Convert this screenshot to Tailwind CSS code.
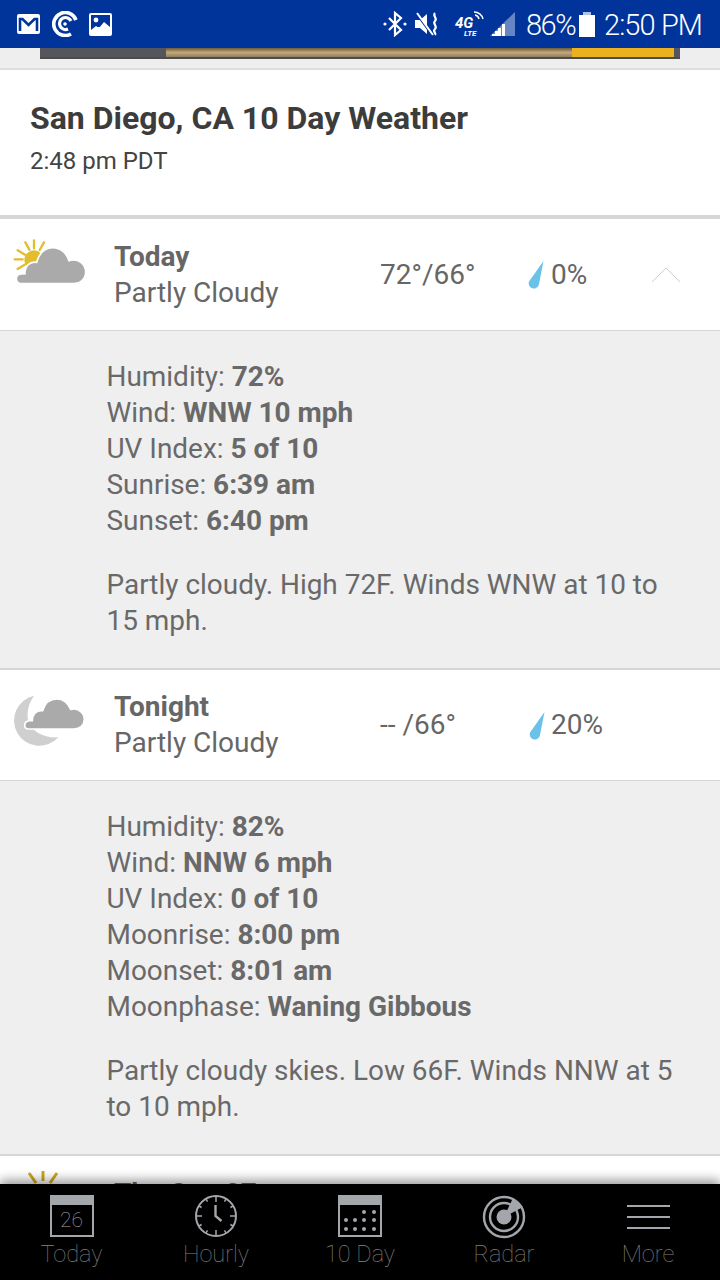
<!DOCTYPE html>
<html lang="en">
<head>
    <meta charset="UTF-8">
    <meta name="viewport" content="width=device-width, initial-scale=1.0">
    <title>San Diego, CA 10 Day Weather</title>
    <script src="https://cdn.jsdelivr.net/npm/@tailwindcss/browser@4"></script>
</head>
<body class="w-[720px] h-[1280px] overflow-hidden bg-[#eeeeee] font-['Roboto',sans-serif] flex flex-col">

    <!-- status bar -->
    <div class="h-[48px] shrink-0 bg-[#00349b] flex items-center justify-between pl-[17px] pr-[18px] text-white relative z-10">
        <div class="flex items-center">
            <svg width="23" height="20" viewBox="0 0 23 20" class="mr-[12px]"><rect width="23" height="20" rx="2" fill="#fff"/><path d="M3 17V5h2.500l6 6 6-6H20v12" fill="none" stroke="#00349b" stroke-width="2.600"/></svg>
            <svg width="26" height="26" viewBox="0 0 26 26" class="mr-[11px]"><path d="M19 23A11.500 11.500 0 1 1 24 9" fill="none" stroke="#fff" stroke-width="3.600"/><path d="M16 18A6 6 0 1 1 19 10" fill="none" stroke="#fff" stroke-width="3.200"/><circle cx="13" cy="13" r="1.800" fill="#fff"/></svg>
            <svg width="23" height="23" viewBox="0 0 23 23"><rect width="23" height="23" rx="2" fill="#fff"/><rect x="2" y="2" width="19" height="12" fill="#00349b"/><rect x="2" y="12" width="6" height="5" fill="#00349b"/><circle cx="7" cy="7" r="2.400" fill="#fff"/><path d="M2 21v-4l5-4 3 2 5-6 6 5v7z" fill="#fff"/></svg>
        </div>
        <div class="flex items-center">
            <svg width="24" height="26" viewBox="0 0 24 26" class="mr-[7px]"><path d="M6 7l12 12-6 5V2l6 5L6 19" fill="none" stroke="#fff" stroke-width="2.200"/><circle cx="2" cy="13" r="1.600" fill="#fff"/><circle cx="22" cy="13" r="1.600" fill="#fff"/></svg>
            <svg width="26" height="26" viewBox="0 0 26 26" class="mr-[15px]"><path d="M1 9h5l7-6v20l-7-6H1z" fill="#fff"/><path d="M1 1l17 23" stroke="#00349b" stroke-width="2"/><path d="M3 2l16 22" stroke="#fff" stroke-width="2"/><path d="M21 2c-3 3 3 5 0 8s3 5 0 8 2 4 0 6" fill="none" stroke="#fff" stroke-width="2.200"/></svg>
            <div class="relative w-[28px] h-[26px] mr-[7px]">
                <span class="absolute left-0 top-[6px] text-[15px] leading-[13px] font-bold italic">4G</span>
                <span class="absolute left-[9px] top-[19px] text-[8px] leading-[7px] font-bold italic">LTE</span>
                <svg class="absolute left-[18px] top-0" width="11" height="11" viewBox="0 0 11 11"><path d="M1 1a9 9 0 0 1 9 7M2 4a5 5 0 0 1 4 4" fill="none" stroke="#fff" stroke-width="1.400"/></svg>
            </div>
            <svg width="25" height="25" viewBox="0 0 25 25" class="mr-[11px]"><path d="M0 24h25V0z" fill="#fff" fill-opacity="0.4"/><path d="M0 24h2V22h3V19h3V16h3V24z" fill="#fff"/><path d="M12 24h3V12h-3z" fill="#fff"/></svg>
            <span class="text-[29px] leading-none font-light tracking-[-1.500px] pt-[3px] w-[47px] whitespace-nowrap">86%</span>
            <svg width="16" height="25" viewBox="0 0 16 25" class="ml-[6px] mr-[9px]"><rect y="3" width="16" height="22" fill="#fff"/><rect x="4" width="8" height="3" fill="#fff" fill-opacity="0.7"/></svg>
            <span class="text-[29px] leading-none font-light tracking-[-0.900px] pt-[3px] w-[98px] whitespace-nowrap">2:50 PM</span>
        </div>
    </div>

    <!-- ad strip -->
    <div class="h-[11px] shrink-0 mx-[40px] flex bg-[#55565d] border-b-2 border-[#4e4c48]">
        <div class="w-[126px]"></div>
        <div class="flex-1 bg-linear-to-b from-[#6b5a3c] via-[#c2a878] to-[#8f8064]"></div>
        <div class="w-[102px] bg-[#ecb11f]"></div>
        <div class="w-[6px]"></div>
    </div>
    <div class="h-[9px] shrink-0 bg-[#eeeeee]"></div>

    <main class="flex-1 min-h-0 overflow-hidden relative border-t-2 border-[#dddddd]">
        <header class="h-[145px] bg-white pl-[30px] pt-[28px]">
            <h1 class="text-[32px] leading-[40px] font-bold text-[#3c3c3c]">San Diego, CA 10 Day Weather</h1>
            <p class="text-[24px] leading-[30px] mt-[8px] text-[#444444]">2:48 pm PDT</p>
        </header>

        <!-- today -->
        <section class="border-t-4 border-[#d6d6d6]">
            <div class="h-[111px] bg-white flex items-center text-[#666666] text-[28px]">
                <svg width="100" height="80" viewBox="0 0 300 240" class="shrink-0 mb-[19px]">
                    <g stroke="#e2bd2e" stroke-width="7" stroke-linecap="round"><path d="M44 103h24M53 76l22 13M76 52l12 22M102 46v24M132 52l-13 23M53 132l21-13"/></g>
                    <circle cx="102" cy="105" r="29" fill="#e2bd2e"/>
                    <path d="M62 176C48 176 42 150 62 147L75 146C72 125 90 108 110 112C118 85 135 68 158 68C182 68 200 85 207 107C235 98 257 118 257 142C257 162 240 176 222 176Z" fill="#aaaaaa" stroke="#fff" stroke-width="5"/>
                </svg>
                <div class="w-[266px] ml-[14px]">
                    <div class="font-bold leading-[36px]">Today</div>
                    <div class="leading-[36px]">Partly Cloudy</div>
                </div>
                <div class="w-[148px]">72°/66°</div>
                <svg width="16" height="29" viewBox="0 0 16 29" class="mr-[7px] mt-[2px]"><path d="M15.500 0L10.800 24A5.200 5.200 0 0 1 1 20.500z" fill="#6ac2e8"/></svg>
                <div class="w-[100px]">0%</div>
                <svg width="30" height="16" viewBox="0 0 30 16"><path d="M1 15L15 1l14 14" fill="none" stroke="#cfcfcf" stroke-width="1"/></svg>
            </div>
            <div class="h-[338px] bg-[#efefef] border-t border-[#d6d6d6] pl-[106.500px] pr-[40px] pt-[28px] text-[27.950px] leading-[36px] text-[#696969]">
                <div>Humidity: <b>72%</b></div>
                <div>Wind: <b>WNW 10 mph</b></div>
                <div>UV Index: <b>5 of 10</b></div>
                <div>Sunrise: <b>6:39 am</b></div>
                <div>Sunset: <b>6:40 pm</b></div>
                <p class="mt-[28px]">Partly cloudy. High 72F. Winds WNW at 10 to 15 mph.</p>
            </div>
        </section>

        <!-- tonight -->
        <section class="border-t-2 border-[#d6d6d6]">
            <div class="h-[110px] bg-white flex items-center text-[#666666] text-[28px]">
                <svg width="100" height="80" viewBox="0 0 300 240" class="shrink-0 mb-[10px]">
                    <path d="M103 47A76 76 0 1 0 175 172C140 175 100 160 85 125C78 95 88 65 103 47Z" fill="#cfcfcf"/>
                    <path d="M85 147C70 147 70 125 88 122L97 122C97 102 110 90 128 92C135 70 150 57 170 57C190 57 205 72 212 88C235 82 253 100 253 118C253 135 240 147 222 147Z" fill="#aaaaaa" stroke="#fff" stroke-width="5"/>
                </svg>
                <div class="w-[266px] ml-[14px]">
                    <div class="font-bold leading-[36px]">Tonight</div>
                    <div class="leading-[36px]">Partly Cloudy</div>
                </div>
                <div class="w-[149px]">-- /66°</div>
                <svg width="16" height="29" viewBox="0 0 16 29" class="mr-[6px] mt-[2px]"><path d="M15.500 0L10.800 24A5.200 5.200 0 0 1 1 20.500z" fill="#6ac2e8"/></svg>
                <div>20%</div>
            </div>
            <div class="h-[374px] bg-[#efefef] border-t border-[#d6d6d6] pl-[106.500px] pr-[40px] pt-[28px] text-[27.950px] leading-[36px] text-[#696969]">
                <div>Humidity: <b>82%</b></div>
                <div>Wind: <b>NNW 6 mph</b></div>
                <div>UV Index: <b>0 of 10</b></div>
                <div>Moonrise: <b>8:00 pm</b></div>
                <div>Moonset: <b>8:01 am</b></div>
                <div>Moonphase: <b>Waning Gibbous</b></div>
                <p class="mt-[28px]">Partly cloudy skies. Low 66F. Winds NNW at 5 to 10 mph.</p>
            </div>
        </section>

        <!-- next day, cut off by the nav -->
        <section class="border-t-2 border-[#d6d6d6]">
            <div class="h-[110px] bg-white flex text-[#666666] text-[28px]">
                <svg width="40" height="30" viewBox="0 0 40 30" class="ml-[23px] mt-[15px] mr-[51px]">
                    <g stroke="#c9a820" stroke-width="3"><path d="M20 0v10M6 2l7 10M34 2l-7 10"/></g>
                </svg>
                <div class="font-bold leading-[36px] mt-[20px]">Thu Sep 27</div>
            </div>
        </section>
    </main>

    <!-- bottom nav -->
    <nav class="h-[96px] shrink-0 bg-black relative z-10 shadow-[0_-4px_10px_rgba(0,0,0,0.4)] grid grid-cols-5 text-[#808080] text-[23.500px] font-thin text-center">
        <a class="flex flex-col items-center pt-[11px] pr-[1px]">
            <div class="w-[44px] h-[42px] border-[2px] border-[#a3a6aa] border-t-[10px] flex items-center justify-center text-[21px] leading-none text-[#a3a6aa]">26</div>
            <span class="leading-[28px] mt-[3px]">Today</span>
        </a>
        <a class="flex flex-col items-center pt-[11px]">
            <svg width="44" height="44" viewBox="0 0 44 44" class="-mt-[1px]" fill="none" stroke="#a3a6aa"><circle cx="22" cy="22" r="20" stroke-width="2"/><path d="M22 2v6M22 36v6M2 22h6M36 22h6" stroke-width="1.500"/><path d="M12 5l1.500 2.600M32 5l-1.500 2.600M5 12l2.600 1.500M39 12l-2.600 1.500M5 32l2.600-1.500M39 32l-2.600-1.500M12 39l1.500-2.600M32 39l-1.500-2.600" stroke-width="1.500"/><path d="M21.500 11v11l6 5" stroke-width="2.400"/></svg>
            <span class="leading-[28px] mt-[2px]">Hourly</span>
        </a>
        <a class="flex flex-col items-center pt-[11px]">
            <svg width="44" height="44" viewBox="0 0 44 44" fill="#a3a6aa"><path d="M0 0h44v42H0zM2 10v30h40V10z" fill-rule="evenodd"/><circle cx="8" cy="25" r="2"/><circle cx="17" cy="25" r="2"/><circle cx="26" cy="25" r="2"/><circle cx="36" cy="25" r="2"/><circle cx="8" cy="34" r="2"/><circle cx="17" cy="34" r="2"/><circle cx="26" cy="34" r="2"/><circle cx="36" cy="34" r="2"/><circle cx="26" cy="17" r="2"/><circle cx="36" cy="17" r="2"/></svg>
            <span class="leading-[28px] mt-[1px]">10 Day</span>
        </a>
        <a class="flex flex-col items-center pt-[11px]">
            <svg width="44" height="44" viewBox="0 0 44 44" fill="none" stroke="#a3a6aa"><circle cx="22" cy="22" r="20" stroke-width="2.400"/><circle cx="22" cy="22" r="14" stroke-width="2.400"/><circle cx="22" cy="22" r="7.500" fill="#a3a6aa" stroke="none"/><path d="M22 22L31 3l10 9z" fill="#a3a6aa" stroke="none"/></svg>
            <span class="leading-[28px] mt-[1px]">Radar</span>
        </a>
        <a class="flex flex-col items-center pt-[11px]">
            <div class="w-[43px] h-[44px] flex flex-col justify-center gap-[9px]">
                <div class="h-[2px] bg-[#a3a6aa]"></div>
                <div class="h-[2px] bg-[#a3a6aa]"></div>
                <div class="h-[2px] bg-[#a3a6aa]"></div>
            </div>
            <span class="leading-[28px] mt-[1px]">More</span>
        </a>
    </nav>
</body>
</html>
